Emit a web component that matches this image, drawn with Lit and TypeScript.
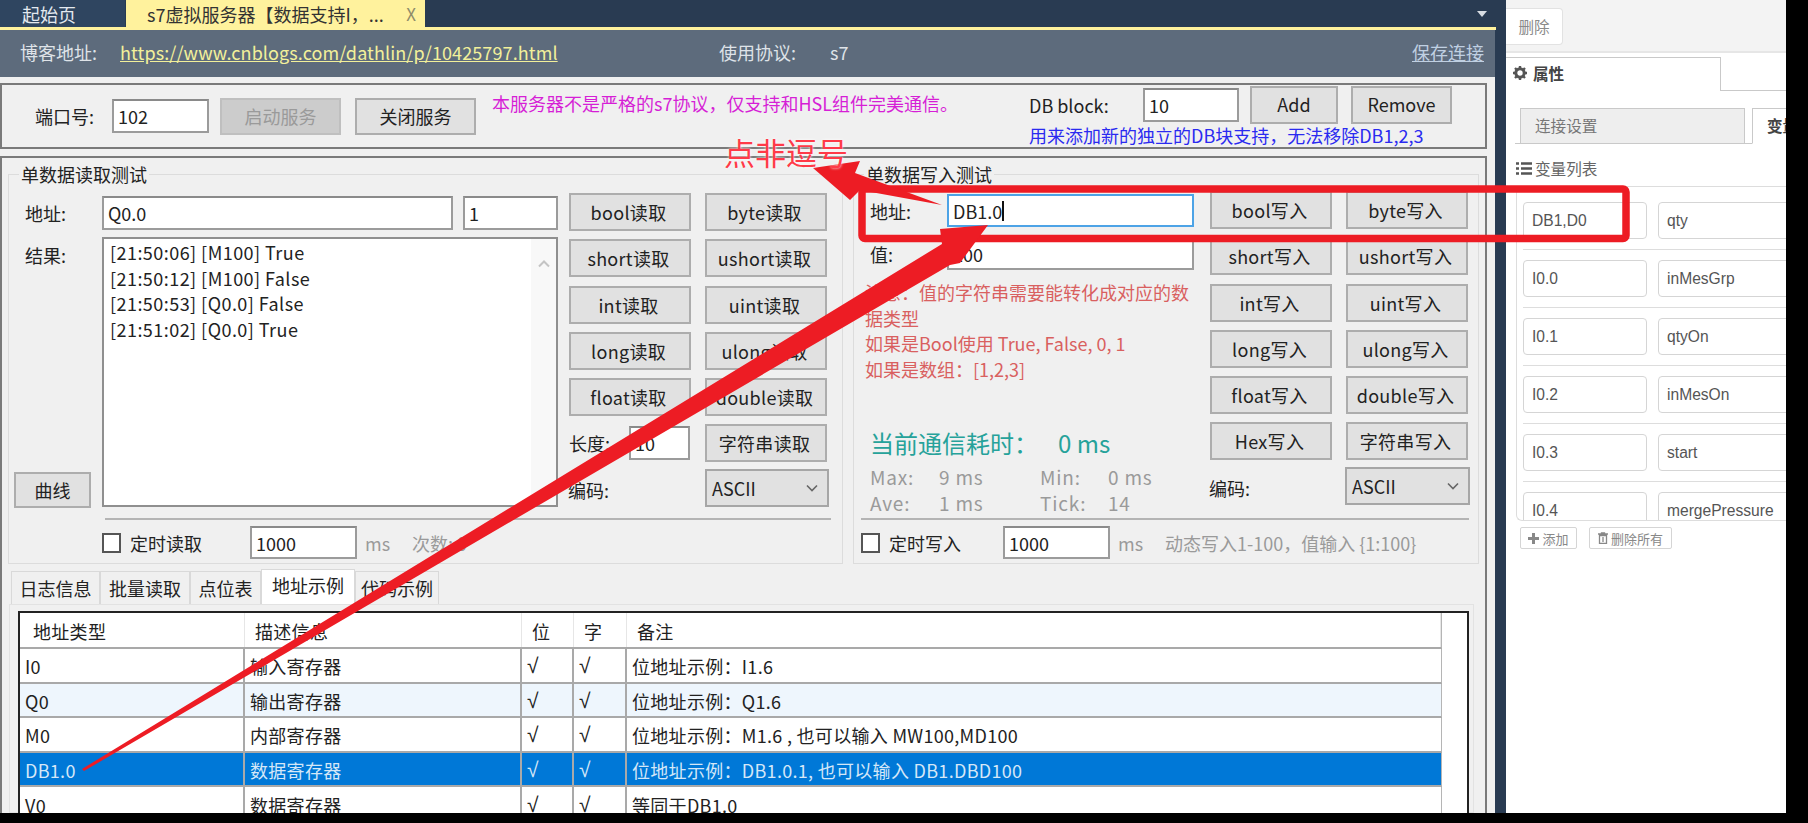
import { LitElement, html, css, svg } from "lit";
import { customElement } from "lit/decorators.js";

const READ_OPS = ["bool", "byte", "short", "ushort", "int", "uint", "long", "ulong", "float", "double"];
const WRITE_OPS = [...READ_OPS, "Hex", "字符串"];

const TABLE_ROWS = [
  { type: "I0", desc: "输入寄存器", note: "位地址示例：I1.6" },
  { type: "Q0", desc: "输出寄存器", note: "位地址示例：Q1.6", alt: true },
  { type: "M0", desc: "内部寄存器", note: "位地址示例：M1.6 , 也可以输入 MW100,MD100" },
  { type: "DB1.0", desc: "数据寄存器", note: "位地址示例：DB1.0.1, 也可以输入 DB1.DBD100", selected: true },
  { type: "V0", desc: "数据寄存器", note: "等同于DB1.0" },
];

const VARIABLES = [
  ["DB1,D0", "qty"],
  ["I0.0", "inMesGrp"],
  ["I0.1", "qtyOn"],
  ["I0.2", "inMesOn"],
  ["I0.3", "start"],
  ["I0.4", "mergePressure"],
];

const chevron = html`<svg class="chev" width="12" height="8" viewBox="0 0 12 8">
  <path d="M1 1.5 6 6.5 11 1.5" fill="none" stroke="#666" stroke-width="1.6" />
</svg>`;

@customElement("app-root")
export class AppRoot extends LitElement {
  static styles = css`
    :host {
      display: block;
      width: 1808px;
      height: 823px;
      background: #000;
      overflow: hidden;
      font-family: "Noto Sans CJK SC", "Noto Sans", sans-serif;
      font-size: 18px;
      color: #222;
    }
    .screen {
      position: relative;
      display: flex;
      width: 1786px;
      height: 813px;
      overflow: hidden;
    }
    .app {
      width: 1506px;
      flex: none;
      display: flex;
      flex-direction: column;
      background: #293b52;
      padding-right: 11px;
      box-sizing: border-box;
    }
    .doc-tabs {
      height: 27px;
      flex: none;
      display: flex;
      position: relative;
      margin-right: -11px;
    }
    .doc-tab {
      display: flex;
      align-items: center;
      box-sizing: border-box;
      white-space: nowrap;
    }
    .doc-tab.home {
      width: 125px;
      margin-right: 1px;
      padding-left: 22px;
      background: #2f4560;
      color: #e4e9ef;
    }
    .doc-tab.active {
      width: 299px;
      padding-left: 21px;
      background: #fff29d;
      color: #333;
      justify-content: space-between;
      padding-right: 9px;
    }
    .doc-tab .close {
      color: #8f8c6a;
      font-size: 17px;
    }
    .tab-menu {
      margin-left: auto;
      margin-right: 19px;
      align-self: center;
      width: 0;
      height: 0;
      border-left: 5px solid transparent;
      border-right: 5px solid transparent;
      border-top: 6px solid #d8dde3;
    }
    .accent {
      height: 3px;
      flex: none;
      background: #fff29d;
      margin-right: -1px;
    }
    .address-bar {
      height: 47px;
      flex: none;
      box-sizing: border-box;
      display: grid;
      grid-template-columns: 100px 599px 111px 1fr auto;
      align-items: center;
      padding: 0 11px 3px 20px;
      background: #5d6b7c;
      color: #dfe3e8;
      white-space: nowrap;
    }
    .address-bar .link {
      color: #f2f09a;
      text-decoration: underline;
      letter-spacing: 0.1px;
    }
    .address-bar .save {
      color: #c0d0e2;
      text-decoration: underline;
    }
    .body {
      flex: 1;
      min-height: 0;
      display: flex;
      flex-direction: column;
      background: #f0f0f0;
      padding: 6px 8px 0 0;
    }
    .server-panel {
      height: 66px;
      flex: none;
      box-sizing: border-box;
      border: 2px solid #7a7a7a;
      display: grid;
      grid-template-columns: 490px 537px 1fr;
      margin-bottom: 7px;
      white-space: nowrap;
    }
    .port {
      display: flex;
      align-items: center;
      padding-left: 33px;
    }
    .port .caption {
      width: 77px;
    }
    .port .btn {
      width: 121px;
      height: 37px;
      margin-left: 11px;
    }
    .port .btn + .btn {
      margin-left: 14px;
    }
    .notice {
      color: #d61fd6;
      padding-top: 5px;
      line-height: 26px;
    }
    .db {
      display: flex;
      flex-direction: column;
    }
    .db-row {
      display: flex;
      align-items: center;
      height: 38px;
      margin-top: 1px;
    }
    .db-row .caption {
      width: 114px;
    }
    .db-row .btn {
      height: 38px;
      margin-left: 11px;
      width: 88px;
      padding-bottom: 3px;
    }
    .db-row .btn.wide {
      margin-left: 13px;
      width: 101px;
    }
    .db-hint {
      color: #2a2af0;
      line-height: 22px;
    }
    .tests {
      flex: 1;
      min-height: 0;
      border: 2px solid #7a7a7a;
      border-bottom: 0;
      display: flex;
      flex-direction: column;
    }
    .groups {
      display: flex;
      gap: 10px;
      padding: 16px 0 0 6px;
    }
    .group {
      height: 390px;
      box-sizing: border-box;
      border: 1px solid #dcdcdc;
    }
    .group.read {
      width: 835px;
    }
    .group.write {
      width: 626px;
    }
    .legend {
      width: fit-content;
      height: 24px;
      line-height: 24px;
      margin: -13px 0 0 10px;
      padding: 0 2px;
      background: #f0f0f0;
    }
    .group-main {
      display: flex;
      height: 318px;
      margin-top: 7px;
    }
    .read .form {
      width: 549px;
      margin-right: 11px;
      padding-top: 3px;
      box-sizing: border-box;
    }
    .write .form {
      width: 333px;
      margin: 0 16px 0 7px;
      padding-top: 3px;
      box-sizing: border-box;
    }
    .write .group-main {
      margin-top: 5px;
      height: 322px;
    }
    .form-row {
      display: flex;
      align-items: center;
      height: 34px;
    }
    .read .form-row > .caption {
      width: 93px;
      padding-left: 16px;
      box-sizing: border-box;
    }
    .write .form-row {
      height: 33px;
      margin-bottom: 10px;
    }
    .write .form-row > .caption {
      width: 86px;
      padding-left: 9px;
      box-sizing: border-box;
    }
    .field {
      box-sizing: border-box;
      display: flex;
      align-items: center;
      height: 100%;
      padding-left: 4px;
      background: #fff;
      border: 2px solid #9b9b9b;
      border-top-color: #8a8a8a;
      white-space: nowrap;
    }
    .field.focus {
      border-color: #4da3e6;
    }
    .caret {
      width: 1.5px;
      height: 20px;
      background: #111;
    }
    .addr {
      width: 351px;
      margin-right: 10px;
    }
    .len {
      width: 95px;
    }
    .write .addr {
      width: 247px;
      margin: 0;
    }
    .result {
      display: flex;
      margin-top: 7px;
      height: 270px;
    }
    .result-side {
      width: 93px;
      display: flex;
      flex-direction: column;
      justify-content: space-between;
      flex: none;
    }
    .result-side .caption {
      padding: 5px 0 0 16px;
    }
    .result-side .btn {
      width: 77px;
      height: 36px;
      margin: 0 0 -1px 5px;
    }
    .log {
      flex: 1;
      display: flex;
      box-sizing: border-box;
      background: #fff;
      border: 2px solid #8f8f8f;
    }
    .log-lines {
      flex: 1;
      padding: 1px 0 0 6px;
      line-height: 25.5px;
      letter-spacing: 0.45px;
    }
    .scroll {
      width: 25px;
      background: #f8f8f8;
      text-align: center;
      padding-top: 8px;
      box-sizing: border-box;
    }
    .ops {
      display: grid;
      grid-template-columns: 122px 122px;
      grid-auto-rows: 38px;
      gap: 8.3px 14px;
    }
    .btn {
      box-sizing: border-box;
      display: flex;
      align-items: center;
      justify-content: center;
      padding: 0;
      background: #e1e1e1;
      border: 2px solid #adadad;
      font: inherit;
      color: #222;
      white-space: nowrap;
    }
    .ops .btn {
      letter-spacing: 0.3px;
      padding-right: 3px;
    }
    .btn.off {
      background: #cccccc;
      border-color: #bfbfbf;
      color: #9a9a9a;
    }
    .length {
      display: flex;
      align-items: center;
      justify-content: space-between;
      white-space: nowrap;
    }
    .length .field {
      width: 61px;
      height: 34px;
      margin-right: 1px;
    }
    .encoding {
      display: flex;
      align-items: center;
      margin-left: -1px;
    }
    .select {
      box-sizing: border-box;
      display: flex;
      align-items: center;
      justify-content: space-between;
      height: 38px;
      width: 124px;
      margin-top: -2px;
      padding: 0 9px 0 5px;
      background: #e1e1e1;
      border: 2px solid #a6a6a6;
    }
    .write .select {
      width: 125px;
      margin-left: -1px;
    }
    .rule {
      height: 2px;
      background: #b4b4b4;
    }
    .read .rule {
      margin: 7px 11px 0 96px;
    }
    .write .rule {
      margin: 5px 9px 0 7px;
    }
    .footer {
      display: flex;
      align-items: center;
      height: 33px;
      margin-top: 6px;
      white-space: nowrap;
    }
    .read .footer {
      padding-left: 93px;
    }
    .write .footer {
      padding-left: 7px;
    }
    .check {
      width: 19px;
      height: 20px;
      flex: none;
      box-sizing: border-box;
      background: #fff;
      border: 2px solid #555;
      margin-right: 9px;
    }
    .footer .timer {
      width: 120px;
    }
    .write .footer .timer {
      width: 114px;
    }
    .footer .field {
      width: 107px;
      flex: none;
    }
    .muted {
      color: #9a9a9a;
    }
    .footer .ms {
      margin-left: 8px;
      width: 47px;
    }
    .warning {
      color: #d9605f;
      line-height: 25.5px;
      padding-left: 4px;
    }
    .latency {
      height: 36px;
      line-height: 36px;
      margin-top: 43px;
      padding-left: 9px;
      font-size: 24px;
      color: #26a29a;
      white-space: nowrap;
    }
    .latency span {
      margin-left: 20px;
    }
    .stats {
      display: grid;
      grid-template-columns: 69px 101px 68px 1fr;
      grid-auto-rows: 26px;
      align-items: center;
      padding-left: 9px;
      margin-top: 2px;
      white-space: nowrap;
      font-size: 19px;
      letter-spacing: 0.8px;
    }
    .pages {
      display: flex;
      flex-direction: column;
      flex: 1;
      min-height: 0;
      margin: 7px 0 0 7px;
    }
    .page-tabs {
      display: flex;
      align-items: flex-end;
      margin-left: 2px;
      height: 33px;
      flex: none;
    }
    .page-tab {
      box-sizing: border-box;
      height: 33px;
      display: flex;
      align-items: center;
      justify-content: center;
      background: #f0f0f0;
      border: 1px solid #d9d9d9;
      border-bottom: 0;
      white-space: nowrap;
    }
    .page-tab.on {
      height: 35px;
      background: #fff;
      padding-bottom: 4px;
    }
    .page-pane {
      flex: 1;
      min-height: 0;
      width: 1465px;
      box-sizing: border-box;
      border: 1px solid #e2e2e2;
      padding: 6px 0 0 8px;
    }
    .grid {
      width: 1451px;
      height: 300px;
      box-sizing: border-box;
      border: 2px solid #222;
      border-bottom: 0;
      background: #fff;
    }
    .row {
      display: grid;
      grid-template-columns: 225px 277px 52px 53px 814px;
      width: 1422px;
      height: 34.6px;
      box-sizing: border-box;
      border-bottom: 2px solid #a9a9a9;
      border-right: 1px solid #b5b5b5;
      white-space: nowrap;
    }
    .row.head {
      height: 36px;
    }
    .row.alt {
      background: #eef6fd;
    }
    .row.selected {
      background: #0078d7;
      color: #d5e7f7;
    }
    .cell {
      display: flex;
      align-items: center;
      padding: 2px 0 0 5px;
      border-right: 2px solid #a9a9a9;
      box-sizing: border-box;
      letter-spacing: 0.3px;
    }
    .cell.tick {
      font-family: "Liberation Sans", sans-serif;
      font-size: 21px;
    }
    .cell:last-child {
      border-right: 0;
    }
    .head .cell {
      border-right: 1px solid #e6e6e6;
      padding-left: 10px;
    }
    .head .cell:first-child {
      padding-left: 13px;
    }
    .side {
      flex: 1;
      min-width: 0;
      background: #fff;
      overflow: hidden;
      font-family: "Liberation Sans", "Noto Sans CJK SC", sans-serif;
      color: #555;
      font-size: 15.6px;
    }
    .toolbar {
      height: 53px;
      box-sizing: border-box;
      padding-top: 8px;
      background: #f3f3f3;
      border-bottom: 2px solid #e6e6e6;
    }
    .toolbar button {
      width: 57px;
      height: 37px;
      box-sizing: border-box;
      padding: 0 0 2px;
      background: #fff;
      border: 1px solid #e2e2e2;
      border-left: 0;
      border-radius: 0 4px 4px 0;
      font: inherit;
      color: #8a8a8a;
    }
    .side-tabs {
      display: flex;
      height: 34px;
      margin-top: 4px;
    }
    .side-tab {
      width: 215px;
      box-sizing: border-box;
      border: 1px solid #c9c9c9;
      border-left: 0;
      border-bottom: 0;
      display: flex;
      align-items: center;
      gap: 5px;
      padding: 0 0 3px 6px;
      font-weight: bold;
      color: #444;
    }
    .side-fill {
      flex: 1;
      border-bottom: 1px solid #c9c9c9;
    }
    .sub-tabs {
      display: flex;
      height: 35px;
      margin: 17px 0 0 9px;
      border-bottom: 1px solid #c9c9c9;
      white-space: nowrap;
    }
    .sub-tab {
      box-sizing: border-box;
      flex: none;
      display: flex;
      align-items: center;
      height: 35px;
      margin-left: 5px;
      padding: 0 0 3px 14px;
    }
    .sub-tab.off {
      width: 225px;
      background: #eee;
      border: 1px solid #c9c9c9;
      border-bottom: 0;
      color: #777;
    }
    .sub-tab.on {
      width: 120px;
      margin-left: 7px;
      background: #fff;
      border: 1px solid #c9c9c9;
      border-bottom: 1px solid #fff;
      height: 36px;
      color: #444;
      font-weight: bold;
    }
    .vars-title {
      display: flex;
      align-items: center;
      gap: 3px;
      height: 42px;
      box-sizing: border-box;
      padding-top: 6px;
      margin-left: 10px;
      color: #666;
    }
    .vars {
      height: 335px;
      margin-left: 10px;
      box-sizing: border-box;
      border: 1px solid #ddd;
      border-right: 0;
      border-bottom-left-radius: 6px;
      padding: 15px 0 0 6px;
      overflow: hidden;
    }
    .var {
      display: flex;
      gap: 11px;
      padding-bottom: 10px;
      margin-bottom: 10px;
      border-bottom: 1px solid #ddd;
    }
    .var div {
      box-sizing: border-box;
      flex: none;
      display: flex;
      align-items: center;
      height: 37px;
      padding-left: 8px;
      border: 1px solid #d5d5d5;
      border-radius: 4px;
      background: #fff;
    }
    .var .key {
      width: 124px;
    }
    .var .name {
      width: 200px;
    }
    .var-actions {
      display: flex;
      gap: 12px;
      margin: 6px 0 0 14px;
    }
    .var-actions button {
      box-sizing: border-box;
      display: flex;
      align-items: center;
      justify-content: center;
      gap: 3px;
      height: 22px;
      padding: 0;
      background: #fff;
      border: 1px solid #d5d5d5;
      border-radius: 2px;
      font: inherit;
      font-size: 13px;
      color: #888;
    }
    .ink {
      position: absolute;
      left: 0;
      top: 0;
      pointer-events: none;
    }
    .ink-label {
      position: absolute;
      left: 724px;
      top: 130px;
      font-size: 31px;
      line-height: 44px;
      color: #ff3a48;
      text-shadow: 0 0 3px #fff;
      white-space: nowrap;
    }
  `;

  renderOps(suffix: string, ops: string[]) {
    return ops.map((op) => html`<button class="btn">${op}${suffix}</button>`);
  }

  renderReadGroup() {
    return html`<section class="group read">
      <div class="legend">单数据读取测试</div>
      <div class="group-main">
        <div class="form">
          <div class="form-row">
            <div class="caption">地址:</div>
            <div class="field addr">Q0.0</div>
            <div class="field len">1</div>
          </div>
          <div class="result">
            <div class="result-side">
              <div class="caption">结果:</div>
              <button class="btn">曲线</button>
            </div>
            <div class="log">
              <div class="log-lines">
                <div>[21:50:06] [M100] True</div>
                <div>[21:50:12] [M100] False</div>
                <div>[21:50:53] [Q0.0] False</div>
                <div>[21:51:02] [Q0.0] True</div>
              </div>
              <div class="scroll">
                <svg width="12" height="8" viewBox="0 0 12 8">
                  <path d="M1 6.5 6 1.5 11 6.5" fill="none" stroke="#c4c4c4" stroke-width="2" />
                </svg>
              </div>
            </div>
          </div>
        </div>
        <div class="ops">
          ${this.renderOps("读取", READ_OPS)}
          <div class="length"><span>长度:</span><div class="field">10</div></div>
          <button class="btn">字符串读取</button>
          <div class="encoding">编码:</div>
          <div class="select">ASCII${chevron}</div>
        </div>
      </div>
      <div class="rule"></div>
      <div class="footer">
        <div class="check"></div>
        <div class="timer">定时读取</div>
        <div class="field">1000</div>
        <div class="ms muted">ms</div>
        <div class="muted">次数: 0</div>
      </div>
    </section>`;
  }

  renderWriteGroup() {
    return html`<section class="group write">
      <div class="legend">单数据写入测试</div>
      <div class="group-main">
        <div class="form">
          <div class="form-row">
            <div class="caption">地址:</div>
            <div class="field addr focus">DB1.0<span class="caret"></span></div>
          </div>
          <div class="form-row">
            <div class="caption">值:</div>
            <div class="field addr">200</div>
          </div>
          <div class="warning">
            注意：值的字符串需要能转化成对应的数<br />据类型<br />如果是Bool使用 True, False, 0, 1<br />如果是数组：[1,2,3]
          </div>
          <div class="latency">当前通信耗时：<span>0 ms</span></div>
          <div class="stats muted">
            <div>Max:</div>
            <div>9 ms</div>
            <div>Min:</div>
            <div>0 ms</div>
            <div>Ave:</div>
            <div>1 ms</div>
            <div>Tick:</div>
            <div>14</div>
          </div>
        </div>
        <div class="ops">
          ${this.renderOps("写入", WRITE_OPS)}
          <div class="encoding">编码:</div>
          <div class="select">ASCII${chevron}</div>
        </div>
      </div>
      <div class="rule"></div>
      <div class="footer">
        <div class="check"></div>
        <div class="timer">定时写入</div>
        <div class="field">1000</div>
        <div class="ms muted">ms</div>
        <div class="muted">动态写入1-100，值输入 {1:100}</div>
      </div>
    </section>`;
  }

  renderPages() {
    const tabs: [string, number][] = [
      ["日志信息", 89],
      ["批量读取", 90],
      ["点位表", 71],
      ["地址示例", 94],
      ["代码示例", 84],
    ];
    return html`<div class="pages">
      <div class="page-tabs">
        ${tabs.map(
          ([label, w]) =>
            html`<div class="page-tab ${label === "地址示例" ? "on" : ""}" style="width:${w}px">${label}</div>`
        )}
      </div>
      <div class="page-pane">
        <div class="grid">
          <div class="row head">
            <div class="cell">地址类型</div>
            <div class="cell">描述信息</div>
            <div class="cell">位</div>
            <div class="cell">字</div>
            <div class="cell">备注</div>
          </div>
          ${TABLE_ROWS.map(
            (r) => html`<div class="row ${r.alt ? "alt" : ""} ${r.selected ? "selected" : ""}">
              <div class="cell">${r.type}</div>
              <div class="cell">${r.desc}</div>
              <div class="cell tick">√</div>
              <div class="cell tick">√</div>
              <div class="cell">${r.note}</div>
            </div>`
          )}
        </div>
      </div>
    </div>`;
  }

  renderSide() {
    return html`<aside class="side">
      <div class="toolbar"><button>删除</button></div>
      <div class="side-tabs">
        <div class="side-tab">
          <svg width="16" height="16" viewBox="0 0 16 16">
            <circle cx="8" cy="8" r="4.2" fill="none" stroke="#555" stroke-width="3" />
            <path d="M8 1v3M8 12v3M1 8h3M12 8h3M3 3l2 2M11 11l2 2M13 3l-2 2M5 11l-2 2" stroke="#555" stroke-width="2.4" />
          </svg>
          属性
        </div>
        <div class="side-fill"></div>
      </div>
      <div class="sub-tabs">
        <div class="sub-tab off">连接设置</div>
        <div class="sub-tab on">变量</div>
      </div>
      <div class="vars-title">
        <svg width="16" height="13" viewBox="0 0 16 13">
          <path d="M0 1.5h3M5 1.5h11M0 6.5h3M5 6.5h11M0 11.5h3M5 11.5h11" stroke="#555" stroke-width="2.4" />
        </svg>
        变量列表
      </div>
      <div class="vars">
        ${VARIABLES.map(
          ([key, name]) => html`<div class="var">
            <div class="key">${key}</div>
            <div class="name">${name}</div>
          </div>`
        )}
      </div>
      <div class="var-actions">
        <button style="width:57px">
          <svg width="11" height="11" viewBox="0 0 11 11"><path d="M5.5 0v11M0 5.5h11" stroke="#888" stroke-width="3" /></svg>
          添加
        </button>
        <button style="width:83px">
          <svg width="10" height="12" viewBox="0 0 10 12">
            <path d="M0 2h10M3.5 2V.8h3V2M1.5 3.5h7V11.500h-7zM5 5v5" fill="none" stroke="#888" stroke-width="1.3" />
          </svg>
          删除所有
        </button>
      </div>
    </aside>`;
  }

  renderInk() {
    return html`<svg class="ink" width="1808" height="813" viewBox="0 0 1808 813">
        ${svg`<rect x="862" y="189" width="764" height="49.5" rx="3" fill="none" stroke="#ed1c24" stroke-width="7.5" />
        <polygon fill="#ed1c24" points="813,168 860,161 855,173 942,205 860,190 850,200" />
        <polygon fill="#ed1c24" points="82,769 942,244 940,229 988,225 960,263 950,265 84,771" />`}
      </svg>
      <div class="ink-label">点非逗号</div>`;
  }

  render() {
    return html`<div class="screen">
      <main class="app">
        <div class="doc-tabs">
          <div class="doc-tab home">起始页</div>
          <div class="doc-tab active">
            <span>s7虚拟服务器【数据支持I，...</span><span class="close">X</span>
          </div>
          <div class="tab-menu"></div>
        </div>
        <div class="accent"></div>
        <div class="address-bar">
          <span>博客地址:</span>
          <span class="link">https://www.cnblogs.com/dathlin/p/10425797.html</span>
          <span>使用协议:</span>
          <span>s7</span>
          <span class="save">保存连接</span>
        </div>
        <div class="body">
          <div class="server-panel">
            <div class="port">
              <div class="caption">端口号:</div>
              <div class="field" style="width:97px;height:34px">102</div>
              <button class="btn off">启动服务</button>
              <button class="btn">关闭服务</button>
            </div>
            <div class="notice">本服务器不是严格的s7协议，仅支持和HSL组件完美通信。</div>
            <div class="db">
              <div class="db-row">
                <div class="caption">DB block:</div>
                <div class="field" style="width:96px;height:34px">10</div>
                <button class="btn">Add</button>
                <button class="btn wide">Remove</button>
              </div>
              <div class="db-hint">用来添加新的独立的DB块支持，无法移除DB1,2,3</div>
            </div>
          </div>
          <div class="tests">
            <div class="groups">${this.renderReadGroup()} ${this.renderWriteGroup()}</div>
            ${this.renderPages()}
          </div>
        </div>
      </main>
      ${this.renderSide()} ${this.renderInk()}
    </div>`;
  }
}
